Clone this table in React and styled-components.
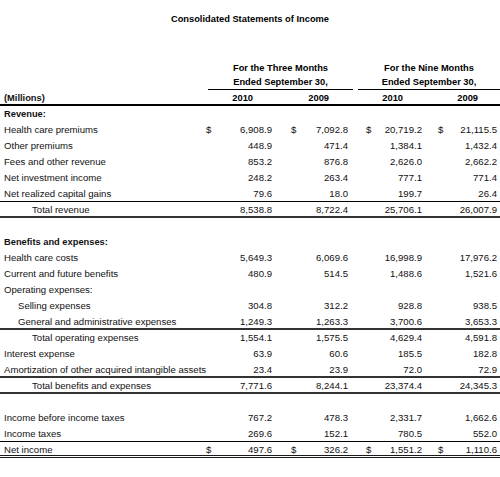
import React from 'react';
import styled, { createGlobalStyle } from 'styled-components';

const GlobalStyle = createGlobalStyle`
  body {
    margin: 0;
    background: #ffffff;
    font-family: "Liberation Sans", Arial, Helvetica, sans-serif;
    color: #111;
  }
`;

const rows = [
  { type: 'section', label: 'Revenue:' },
  { label: 'Health care premiums', dollar: true, values: ['6,908.9', '7,092.8', '20,719.2', '21,115.5'] },
  { label: 'Other premiums', values: ['448.9', '471.4', '1,384.1', '1,432.4'] },
  { label: 'Fees and other revenue', values: ['853.2', '876.8', '2,626.0', '2,662.2'] },
  { label: 'Net investment income', values: ['248.2', '263.4', '777.1', '771.4'] },
  { label: 'Net realized capital gains', values: ['79.6', '18.0', '199.7', '26.4'], rule: 'thin' },
  { label: 'Total revenue', indent: 2, values: ['8,538.8', '8,722.4', '25,706.1', '26,007.9'], rule: 'thick' },
  { type: 'blank' },
  { type: 'section', label: 'Benefits and expenses:' },
  { label: 'Health care costs', values: ['5,649.3', '6,069.6', '16,998.9', '17,976.2'] },
  { label: 'Current and future benefits', values: ['480.9', '514.5', '1,488.6', '1,521.6'] },
  { label: 'Operating expenses:' },
  { label: 'Selling expenses', indent: 1, values: ['304.8', '312.2', '928.8', '938.5'] },
  { label: 'General and administrative expenses', indent: 1, values: ['1,249.3', '1,263.3', '3,700.6', '3,653.3'], rule: 'thick' },
  { label: 'Total operating expenses', indent: 2, values: ['1,554.1', '1,575.5', '4,629.4', '4,591.8'] },
  { label: 'Interest expense', values: ['63.9', '60.6', '185.5', '182.8'] },
  { label: 'Amortization of other acquired intangible assets', values: ['23.4', '23.9', '72.0', '72.9'], rule: 'thick' },
  { label: 'Total benefits and expenses', indent: 2, values: ['7,771.6', '8,244.1', '23,374.4', '24,345.3'], rule: 'thick' },
  { type: 'blank' },
  { label: 'Income before income taxes', values: ['767.2', '478.3', '2,331.7', '1,662.6'] },
  { label: 'Income taxes', values: ['269.6', '152.1', '780.5', '552.0'], rule: 'thin' },
  { label: 'Net income', dollar: true, values: ['497.6', '326.2', '1,551.2', '1,110.6'], rule: 'double' },
];

const Statement = () => {
  return (
    <Page>
      <GlobalStyle />
      <Title>Consolidated Statements of Income</Title>

      <PeriodHeader>
        <span />
        <Period>
          <div>For the Three Months</div>
          <div className="ended">Ended September 30,</div>
        </Period>
        <span />
        <Period>
          <div>For the Nine Months</div>
          <div className="ended">Ended September 30,</div>
        </Period>
      </PeriodHeader>

      <Row $rule="heavy">
        <Label $bold>(Millions)</Label>
        {['2010', '2009', '2010', '2009'].map((year, i) => (
          <React.Fragment key={i}>
            <Year>{year}</Year>
            {i < 3 && <span />}
          </React.Fragment>
        ))}
      </Row>

      {rows.map((row, index) => {
        if (row.type === 'blank') return <Row key={index} />;
        if (row.type === 'section') {
          return (
            <Row key={index}>
              <Label $bold>{row.label}</Label>
            </Row>
          );
        }
        return (
          <Row key={index} $rule={row.rule}>
            <Label $indent={row.indent || 0}>{row.label}</Label>
            {row.values &&
              row.values.map((value, i) => (
                <React.Fragment key={i}>
                  <Amount>
                    <span>{row.dollar ? '$' : ''}</span>
                    <span>{value}</span>
                  </Amount>
                  {i < 3 && <span />}
                </React.Fragment>
              ))}
          </Row>
        );
      })}
    </Page>
  );
};

const Page = styled.div`
  width: 500px;
  padding-top: 11px;
  font-size: 9.6px;
`;

const Title = styled.div`
  text-align: center;
  font-weight: 700;
  font-size: 9.3px;
  line-height: 16px;
  color: #000;
  margin-bottom: 33px;
`;

const PeriodHeader = styled.div`
  display: grid;
  grid-template-columns: 208px 145px 5px 142px;
`;

const Period = styled.div`
  text-align: center;
  font-weight: 700;
  font-size: 9.3px;
  line-height: 16px;
  color: #000;
  border-bottom: 1px solid #000;

  .ended {
    line-height: 13px;
  }
`;

const ruleStyles = {
  thin: 'border-bottom: 1px solid #000;',
  thick: 'border-bottom: 2px solid #333;',
  heavy: 'border-bottom: 2px solid #000;',
  double: 'border-bottom: 3px double #1a1a1a;',
};

const Row = styled.div`
  display: grid;
  grid-template-columns: 206px 66px 19px 57px 18px 56px 16px 59px 3px;
  box-sizing: border-box;
  height: 16px;
  line-height: 16px;
  align-items: center;
  ${({ $rule }) => ($rule ? ruleStyles[$rule] : '')}
`;

const Label = styled.div`
  padding-left: ${({ $indent = 0 }) => 4 + $indent * 14}px;
  font-weight: ${({ $bold }) => ($bold ? 700 : 400)};
  font-size: ${({ $bold }) => ($bold ? '9.3px' : '9.6px')};
  color: #111;
  white-space: nowrap;
`;

const Year = styled.div`
  text-align: right;
  padding-right: 19px;
  font-weight: 700;
  font-size: 9.3px;
  color: #000;
`;

const Amount = styled.div`
  display: flex;
  justify-content: space-between;
  color: #111;
  white-space: nowrap;
`;

export default Statement;
